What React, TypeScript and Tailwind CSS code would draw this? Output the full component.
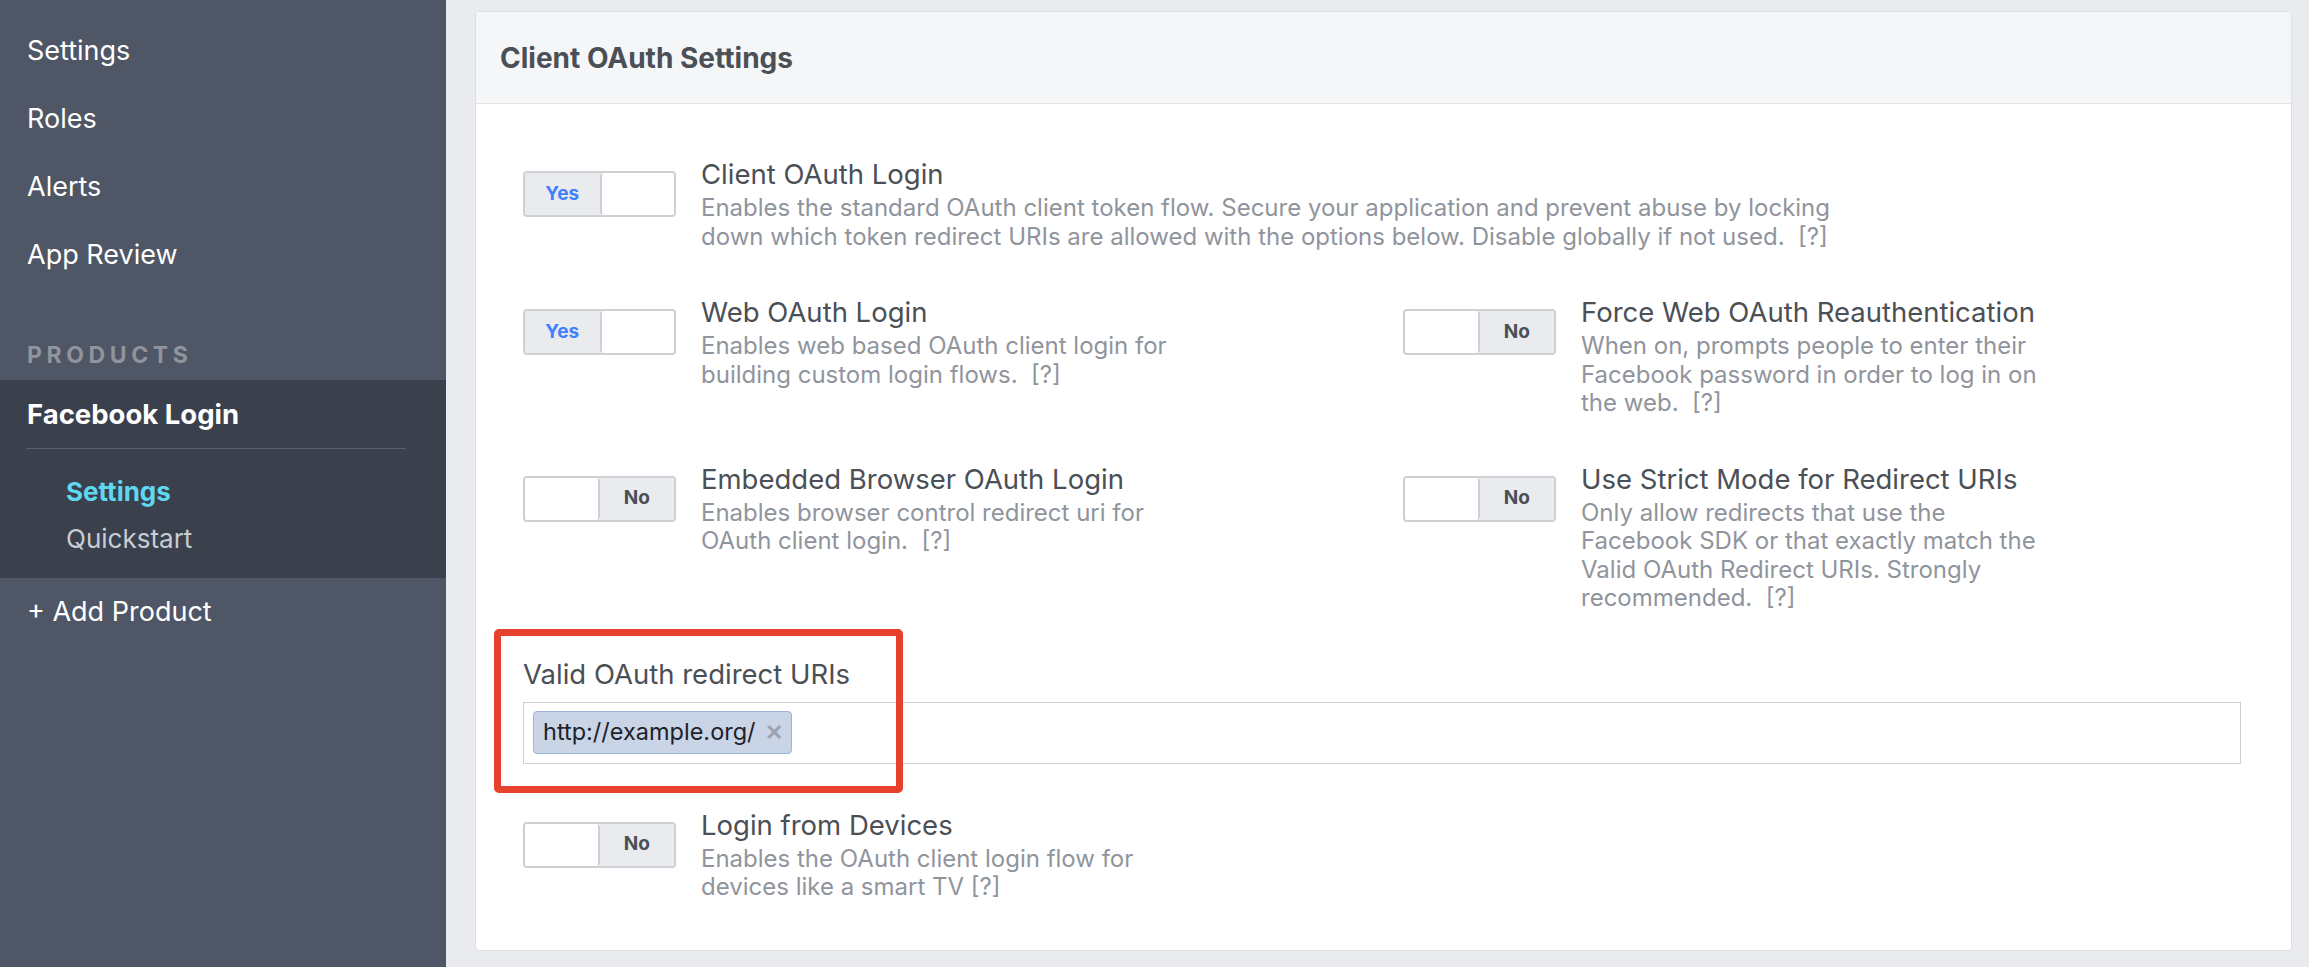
import React from "react"

const FONT = "font-['Inter','Liberation_Sans',sans-serif]"

function Toggle({ on }: { on: boolean }) {
  return (
    <div className="flex h-[46px] w-[153px] shrink-0 overflow-hidden rounded-[4px] border-2 border-[#ced0d4] bg-white">
      {on ? (
        <>
          <div className="flex w-1/2 items-center justify-center bg-[#e9ebee] text-[19px] font-bold text-[#4080ff]">Yes</div>
          <div className="w-1/2 rounded-[3px] border-l-2 border-[#ced0d4] bg-white" />
        </>
      ) : (
        <>
          <div className="w-1/2 rounded-[3px] border-r-2 border-[#ced0d4] bg-white" />
          <div className="flex w-1/2 items-center justify-center bg-[#e9ebee] text-[19px] font-bold text-[#4b4f56]">No</div>
        </>
      )}
    </div>
  )
}

function Setting({ on, title, lines }: { on: boolean; title: string; lines: string[] }) {
  return (
    <div className="flex items-start gap-[25px]">
      <div className="mt-[12px]">
        <Toggle on={on} />
      </div>
      <div>
        <div className="whitespace-nowrap text-[27.5px] leading-[30px] text-[#4b4f56]">{title}</div>
        <div className="mt-[5px] text-[24px] leading-[28.5px] text-[#90949c]">
          {lines.map((l, i) => (
            <div key={i} className="whitespace-pre">{l}</div>
          ))}
        </div>
      </div>
    </div>
  )
}

const topLinks = ["Settings", "Roles", "Alerts", "App Review"]

export default function App() {
  return (
    <div className={`flex h-[967px] w-full overflow-hidden ${FONT}`}>
      {/* sidebar */}
      <aside className="w-[446px] shrink-0 bg-[#4f5665]">
        <div className="pt-[17px]">
          {topLinks.map((t) => (
            <div key={t} className="flex h-[68px] items-center pl-[27px] text-[27px] text-white">{t}</div>
          ))}
        </div>
        <div className="flex h-[91px] items-end pb-[13px] pl-[27px]">
          <span className="text-[23px] font-bold leading-[24px] tracking-[0.2em] text-[#90949c]">PRODUCTS</span>
        </div>
        <div className="bg-[#3b404d] pb-[24px] pt-[19px]">
          <div className="pl-[27px] text-[27.5px] font-bold leading-[30px] text-white">Facebook Login</div>
          <div className="ml-[26px] mt-[19px] h-px w-[380px] bg-[#5b616e]" />
          <div className="mt-[28px] pl-[66px] text-[26px] font-bold leading-[30px] text-[#5dd8ee]">Settings</div>
          <div className="mt-[17px] pl-[66px] text-[26px] leading-[30px] text-[#c8ccd3]">Quickstart</div>
        </div>
        <div className="pl-[27px] pt-[19px] text-[27px] leading-[30px] text-white">+ Add Product</div>
      </aside>

      {/* main */}
      <main className="flex-1 bg-[#e9ebee] pl-[29px] pr-[17px] pt-[11px]">
        <div className="overflow-hidden rounded-[4px] border border-[#dddfe2] bg-white">
          <div className="flex h-[92px] items-center border-b border-[#e5e5e5] bg-[#f5f6f7] pl-[24px]">
            <h2 className="text-[28px] font-bold text-[#4b4f56]">Client OAuth Settings</h2>
          </div>

          <div className="flex flex-col gap-[46px] pb-[48px] pl-[47px] pr-[50px] pt-[55px]">
            <Setting
              on
              title="Client OAuth Login"
              lines={[
                "Enables the standard OAuth client token flow. Secure your application and prevent abuse by locking",
                "down which token redirect URIs are allowed with the options below. Disable globally if not used.  [?]",
              ]}
            />

            <div className="grid grid-cols-[880px_1fr]">
              <Setting
                on
                title="Web OAuth Login"
                lines={["Enables web based OAuth client login for", "building custom login flows.  [?]"]}
              />
              <Setting
                on={false}
                title="Force Web OAuth Reauthentication"
                lines={["When on, prompts people to enter their", "Facebook password in order to log in on", "the web.  [?]"]}
              />
            </div>

            <div className="grid grid-cols-[880px_1fr]">
              <Setting
                on={false}
                title="Embedded Browser OAuth Login"
                lines={["Enables browser control redirect uri for", "OAuth client login.  [?]"]}
              />
              <Setting
                on={false}
                title="Use Strict Mode for Redirect URIs"
                lines={[
                  "Only allow redirects that use the",
                  "Facebook SDK or that exactly match the",
                  "Valid OAuth Redirect URIs. Strongly",
                  "recommended.  [?]",
                ]}
              />
            </div>

            <div className="relative">
              <div className="text-[27.5px] leading-[30px] text-[#4b4f56]">Valid OAuth redirect URIs</div>
              <div className="mt-[13px] flex h-[62px] items-start border border-[#ccd0d5] pl-[9px] pt-[8px]">
                <div className="flex h-[43px] items-center gap-[9px] rounded-[4px] border-[1.5px] border-[#9cb4d8] bg-[#c9d4e6] pl-[9px] pr-[8px]">
                  <span className="text-[23.5px] text-[#1d2129]">http://example.org/</span>
                  <span className="text-[22px] font-black leading-none text-[#9aa3b1]">✕</span>
                </div>
              </div>
              {/* annotation highlight */}
              <div className="pointer-events-none absolute left-[-29px] top-[-30px] z-10 h-[164px] w-[409px] rounded-[5px] border-[7px] border-[#e5412d]" />
            </div>

            <Setting
              on={false}
              title="Login from Devices"
              lines={["Enables the OAuth client login flow for", "devices like a smart TV [?]"]}
            />
          </div>
        </div>
      </main>
    </div>
  )
}
